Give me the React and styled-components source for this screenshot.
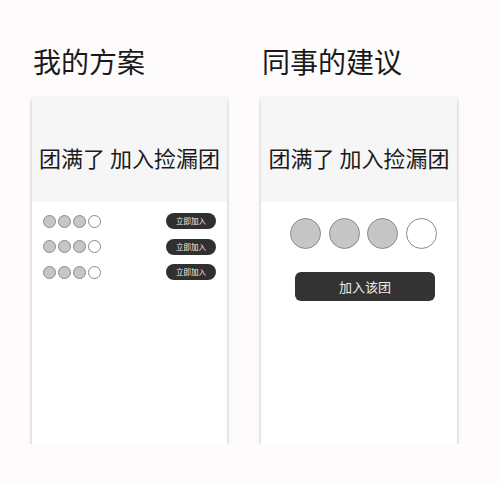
import React from "react";
import styled, { createGlobalStyle } from "styled-components";

const Global = createGlobalStyle`
  html, body { margin: 0; padding: 0; background: #fdfbfc; }
  body { font-family: "Noto Sans CJK SC", "Noto Sans", sans-serif; color: #1a1a1a; }
`;

const Page = styled.div`
  display: flex;
  gap: 34px;
  padding: 47px 0 0 32px;
`;

const Column = styled.section`
  display: flex;
  flex-direction: column;
  gap: 22px;
  width: ${(p) => p.$w}px;
`;

const Title = styled.h2`
  margin: 0 0 0 1px;
  font-size: 28px;
  line-height: 28px;
  font-weight: 400;
  color: #1a1a1a;
`;

const Card = styled.div`
  height: 347px;
  background: #ffffff;
  box-shadow: 0 3px 4px rgba(0, 0, 0, 0.22), 0 0 2px rgba(0, 0, 0, 0.08);
  display: flex;
  flex-direction: column;
`;

const Banner = styled.div`
  height: 105px;
  box-sizing: border-box;
  padding-top: 14px;
  background: #f6f6f6;
  display: flex;
  align-items: center;
  justify-content: center;
  font-size: 22px;
  line-height: 22px;
  color: #1a1a1a;
  white-space: nowrap;
`;

const RowList = styled.div`
  display: flex;
  flex-direction: column;
  gap: 9.5px;
  padding: 11px 11px 0 11px;
`;

const Row = styled.div`
  display: flex;
  align-items: center;
  justify-content: space-between;
  height: 16px;
`;

const Dots = styled.div`
  display: flex;
  gap: ${(p) => p.$gap}px;
  margin-left: ${(p) => p.$ml || 0}px;
`;

const Dot = styled.span`
  display: block;
  box-sizing: border-box;
  width: ${(p) => p.$size}px;
  height: ${(p) => p.$size}px;
  border-radius: 50%;
  border: 1px solid #8a8a8a;
  background: ${(p) => (p.$filled ? "#c6c6c6" : "#ffffff")};
`;

const SmallButton = styled.button`
  width: 50px;
  height: 16px;
  padding: 0;
  border: none;
  border-radius: 8px;
  background: #303030;
  color: #f0f0f0;
  font-family: inherit;
  font-size: 7.5px;
  line-height: 16px;
`;

const Suggest = styled.div`
  display: flex;
  flex-direction: column;
  align-items: flex-start;
  padding: 16px 0 0 29px;
  gap: 23px;
`;

const BigButton = styled.button`
  width: 140px;
  height: 29px;
  margin-left: 5px;
  padding: 0;
  border: none;
  border-radius: 6px;
  background: #333333;
  color: #eeeeee;
  font-family: inherit;
  font-size: 13px;
  line-height: 29px;
`;

const fills = [true, true, true, false];

function DotRow({ size, gap, ml }) {
  return (
    <Dots $gap={gap} $ml={ml}>
      {fills.map((f, i) => (
        <Dot key={i} $size={size} $filled={f} />
      ))}
    </Dots>
  );
}

export default function App() {
  return (
    <>
      <Global />
      <Page>
        <Column $w={195}>
          <Title>我的方案</Title>
          <Card>
            <Banner>团满了 加入捡漏团</Banner>
            <RowList>
              {[0, 1, 2].map((r) => (
                <Row key={r}>
                  <DotRow size={13} gap={2} />
                  <SmallButton>立即加入</SmallButton>
                </Row>
              ))}
            </RowList>
          </Card>
        </Column>
        <Column $w={196}>
          <Title>同事的建议</Title>
          <Card>
            <Banner>团满了 加入捡漏团</Banner>
            <Suggest>
              <DotRow size={31} gap={7.5} />
              <BigButton>加入该团</BigButton>
            </Suggest>
          </Card>
        </Column>
      </Page>
    </>
  );
}
